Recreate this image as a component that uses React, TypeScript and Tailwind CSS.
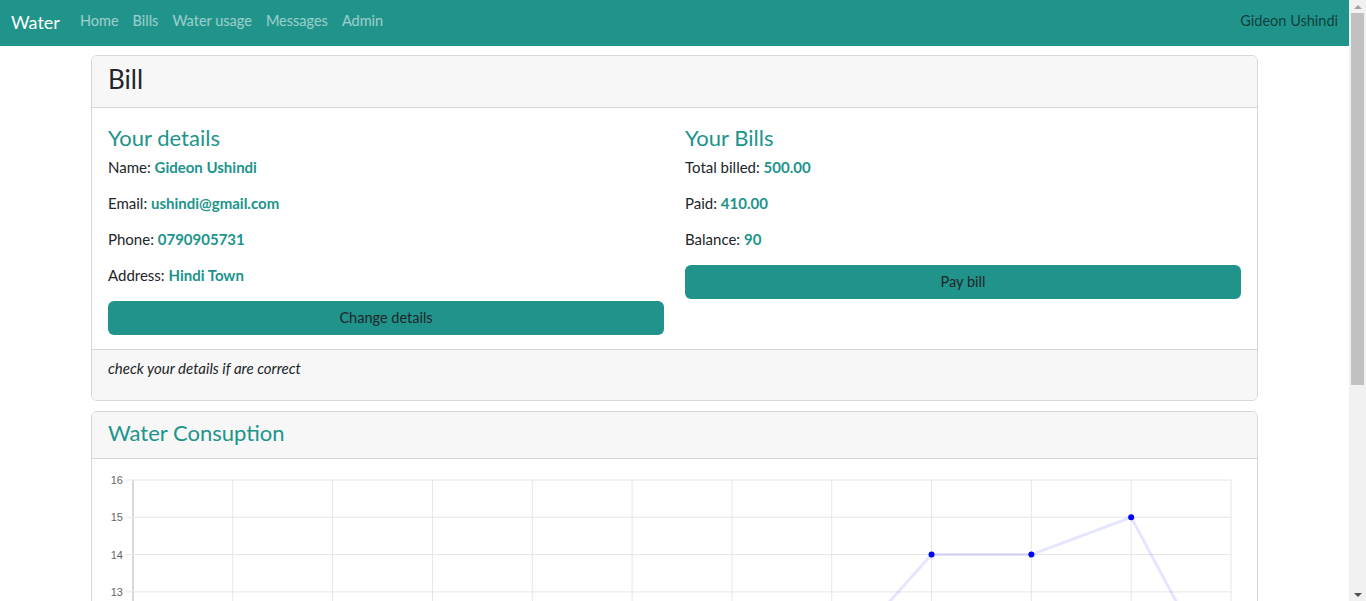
import React from 'react';

const navLinks = ['Home', 'Bills', 'Water usage', 'Messages', 'Admin'];

const details = [
  { label: 'Name', value: 'Gideon Ushindi' },
  { label: 'Email', value: 'ushindi@gmail.com' },
  { label: 'Phone', value: '0790905731' },
  { label: 'Address', value: 'Hindi Town' },
];

const bills = [
  { label: 'Total billed', value: '500.00' },
  { label: 'Paid', value: '410.00' },
  { label: 'Balance', value: '90' },
];

// monthly usage, last months are the only ones in view
const usage = [8, 6, 9, 7, 10, 9, 8, 11, 14, 14, 15, 10];

function Navbar() {
  return (
    <nav className="h-[46px] bg-[#20948b] flex items-center pl-[11px] pr-[11px] pb-[3px]">
      <span className="text-[18px] text-white mr-[20px] leading-none">Water</span>
      <ul className="flex items-center gap-[14px]">
        {navLinks.map(link => (
          <li key={link} className="text-[14.5px] text-white/55 leading-none">{link}</li>
        ))}
      </ul>
      <span className="ml-auto text-[14.5px] text-black/60 leading-none">Gideon Ushindi</span>
    </nav>
  );
}

function InfoRow({ label, value }: { label: string; value: string }) {
  return (
    <p className="text-[15px] leading-5 mb-4 text-[#212529]">
      {label}: <b className="font-bold text-[#20948b]">{value}</b>
    </p>
  );
}

function BillCard() {
  return (
    <section className="border border-[#d6d6d6] rounded-[6px] overflow-hidden">
      <header className="h-[52px] bg-[#f7f7f7] border-b border-[#d6d6d6] px-4 pb-[5px] flex items-center">
        <h2 className="text-[26px] leading-[32px] text-[#212529]">Bill</h2>
      </header>
      <div className="grid grid-cols-2 gap-x-[21px] px-4 pt-4 pb-[14px]">
        <div>
          <h3 className="text-[22px] leading-[27px] mb-[6px] text-[#20948b]">Your details</h3>
          {details.map(d => <InfoRow key={d.label} {...d} />)}
          <button className="w-full h-[34px] rounded-[6px] bg-[#20948b] text-[14.5px] text-[#212529]">Change details</button>
        </div>
        <div>
          <h3 className="text-[22px] leading-[27px] mb-[6px] text-[#20948b]">Your Bills</h3>
          {bills.map(b => <InfoRow key={b.label} {...b} />)}
          <button className="w-full h-[34px] rounded-[6px] bg-[#20948b] text-[14.5px] text-[#212529]">Pay bill</button>
        </div>
      </div>
      <footer className="bg-[#f7f7f7] border-t border-[#d6d6d6] px-4 pt-2 pb-[6px]">
        <p className="italic text-[15px] leading-5 mb-4 text-[#212529]">check your details if are correct</p>
      </footer>
    </section>
  );
}

function UsageChart() {
  const W = 1132;
  const H = 140;
  const x0 = 25;
  const x1 = 1123;
  const y0 = 5;
  const unit = 37.3;
  const step = (x1 - x0) / (usage.length - 1);
  const yOf = (v: number) => y0 + (16 - v) * unit;
  const ticks = [16, 15, 14, 13];
  const pts = usage.map((v, i) => [x0 + i * step, yOf(v)]);

  return (
    <svg width={W} height={H} viewBox={`0 0 ${W} ${H}`} className="block">
      {usage.map((_, i) => (
        <line key={i} x1={x0 + i * step} x2={x0 + i * step} y1={y0} y2={H}
          stroke={i === 0 ? '#b3b3b3' : '#e6e6e6'} strokeWidth={1} />
      ))}
      {ticks.map(t => (
        <g key={t}>
          <line x1={17} x2={x1} y1={yOf(t)} y2={yOf(t)} stroke="#e6e6e6" strokeWidth={1} />
          <text x={15} y={yOf(t) + 4} textAnchor="end" fontSize={11}
            fontFamily="'Liberation Sans', Arial, sans-serif" fill="#666">{t}</text>
        </g>
      ))}
      <polyline points={pts.map(p => p.join(',')).join(' ')} fill="none"
        stroke="rgba(0,0,255,0.1)" strokeWidth={3} />
      {pts.map(([x, y], i) => <circle key={i} cx={x} cy={y} r={3} fill="#0000ff" />)}
    </svg>
  );
}

function ConsumptionCard() {
  return (
    <section className="mt-[10px] border border-[#d6d6d6] rounded-[6px] overflow-hidden">
      <header className="h-[47px] bg-[#f7f7f7] border-b border-[#d6d6d6] px-4 pb-[5px] flex items-center">
        <h3 className="text-[22px] leading-[27px] text-[#20948b]">Water Consuption</h3>
      </header>
      <div className="px-4 pt-4">
        <UsageChart />
      </div>
    </section>
  );
}

function Scrollbar() {
  return (
    <div className="w-[17px] shrink-0 bg-[#f1f1f1] flex flex-col items-center">
      <div className="h-[13px] flex items-center justify-center">
        <div className="w-0 h-0 border-x-[4px] border-x-transparent border-b-[4px] border-b-[#a3a3a3]" />
      </div>
      <div className="w-[13px] h-[372px] bg-[#c1c1c1]" />
      <div className="flex-1" />
      <div className="h-[13px] flex items-center justify-center">
        <div className="w-0 h-0 border-x-[4px] border-x-transparent border-t-[4px] border-t-[#505050]" />
      </div>
    </div>
  );
}

export default function App() {
  return (
    <div className="h-screen flex overflow-hidden bg-white text-[#212529] font-['Lato',sans-serif]">
      <div className="flex-1 min-w-0">
        <Navbar />
        <main className="w-[1167px] ml-[91px] mt-[9px]">
          <BillCard />
          <ConsumptionCard />
        </main>
      </div>
      <Scrollbar />
    </div>
  );
}
